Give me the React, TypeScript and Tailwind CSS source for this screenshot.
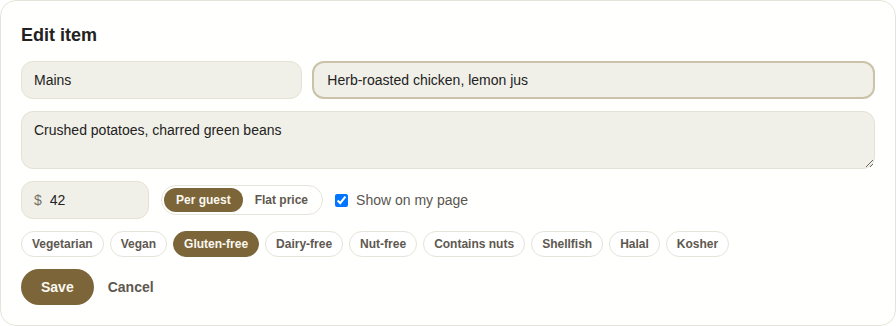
import { useState } from "react";

const TAGS = [
  "Vegetarian",
  "Vegan",
  "Gluten-free",
  "Dairy-free",
  "Nut-free",
  "Contains nuts",
  "Shellfish",
  "Halal",
  "Kosher",
];

export default function App() {
  const [mode, setMode] = useState<"guest" | "flat">("guest");
  const [tags, setTags] = useState<string[]>(["Gluten-free"]);
  const [shown, setShown] = useState(true);

  const toggleTag = (t: string) =>
    setTags((cur) => (cur.includes(t) ? cur.filter((x) => x !== t) : [...cur, t]));

  return (
    <div className="bg-white font-['Liberation_Sans',Arial,sans-serif] text-[#222]">
      <div className="flex h-[326px] w-[896px] flex-col gap-3 rounded-2xl border border-[#e6e4da] bg-[#fffffd] p-5">
        <h2 className="text-lg leading-7 font-bold text-[#222]">Edit item</h2>

        <div className="grid grid-cols-[1fr_2fr] gap-2.5">
          <input
            defaultValue="Mains"
            className="h-[38px] rounded-xl border border-[#e4e1d6] bg-[#f1f0e8] px-3 text-sm text-[#222] outline-none"
          />
          <input
            defaultValue="Herb-roasted chicken, lemon jus"
            className="h-[38px] rounded-xl border-2 border-[#cbc2a9] bg-[#f1f0e8] px-[13px] text-sm text-[#222] outline-none"
          />
        </div>

        <textarea
          rows={2}
          defaultValue="Crushed potatoes, charred green beans"
          className="h-[58px] w-full rounded-xl border border-[#e4e1d6] bg-[#f1f0e8] px-3 py-2 text-sm leading-5 text-[#222] outline-none"
        />

        <div className="flex items-center gap-3">
          <div className="flex h-[38px] w-[128px] items-center gap-2 rounded-xl border border-[#e4e1d6] bg-[#f1f0e8] px-3 text-sm">
            <span className="text-[#777168]">$</span>
            <input
              defaultValue="42"
              className="w-full bg-transparent text-sm text-[#222] outline-none"
            />
          </div>

          <div className="flex h-[30px] items-center rounded-full border border-[#e6e3da] p-[2px]">
            <button
              onClick={() => setMode("guest")}
              className={
                mode === "guest"
                  ? "h-[24px] rounded-full bg-[#7b6539] px-3 text-xs font-bold text-[#fbf8f0]"
                  : "h-[24px] rounded-full px-3 text-xs font-bold text-[#5e5850]"
              }
            >
              Per guest
            </button>
            <button
              onClick={() => setMode("flat")}
              className={
                mode === "flat"
                  ? "h-[24px] rounded-full bg-[#7b6539] px-3 text-xs font-bold text-[#fbf8f0]"
                  : "h-[24px] rounded-full px-3 text-xs font-bold text-[#5e5850]"
              }
            >
              Flat price
            </button>
          </div>

          <label className="flex items-center gap-2 text-sm text-[#5a5650]">
            <input
              type="checkbox"
              checked={shown}
              onChange={(e) => setShown(e.target.checked)}
              className="h-[13px] w-[13px]"
            />
            Show on my page
          </label>
        </div>

        <div className="flex flex-wrap gap-1.5">
          {TAGS.map((t) => {
            const on = tags.includes(t);
            return (
              <button
                key={t}
                onClick={() => toggleTag(t)}
                className={
                  on
                    ? "h-[26px] rounded-full border border-[#7b6539] bg-[#7b6539] px-2.5 text-xs font-bold text-[#fbf8f0]"
                    : "h-[26px] rounded-full border border-[#e6e3da] bg-white px-2.5 text-xs font-bold text-[#5e5850]"
                }
              >
                {t}
              </button>
            );
          })}
        </div>

        <div className="flex items-center gap-2">
          <button className="h-[36px] rounded-full bg-[#7b6539] px-5 text-sm font-bold text-[#fbf8f0]">
            Save
          </button>
          <button className="px-1.5 text-sm font-bold text-[#5e5850]">Cancel</button>
        </div>
      </div>
    </div>
  );
}
